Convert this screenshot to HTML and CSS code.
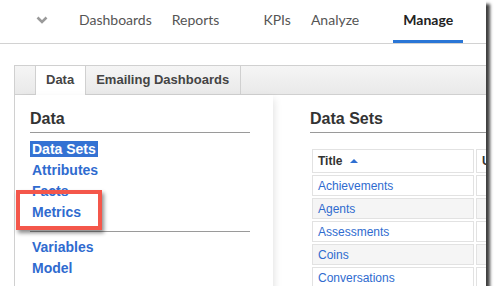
FILE: index.html
```html
<!DOCTYPE html>
<html lang="en">
<head>
  <meta charset="UTF-8">
  <title>Manage - Data</title>
  <link rel="stylesheet" href="styles.css">
</head>
<body>
  <div class="frame">
    <div class="topnav">
      <span class="nav-toggle">
        <svg width="12" height="8" viewBox="0 0 12 8"><polyline points="1.5,1.5 6,6 10.5,1.5" fill="none" stroke="#9a9a9a" stroke-width="2.6"/></svg>
      </span>
      <a class="nav-item">Dashboards</a>
      <a class="nav-item">Reports</a>
      <a class="nav-item gap">KPIs</a>
      <a class="nav-item">Analyze</a>
      <a class="nav-item gap active">Manage</a>
    </div>

    <div class="main">
      <div class="tabpanel">
        <div class="tabs">
          <span class="tab-spacer"></span>
          <span class="tab active">Data</span>
          <span class="tab">Emailing Dashboards</span>
        </div>
        <div class="tab-body">
          <div class="sidebar">
            <h2 class="section-title">Data</h2>
            <ul class="side-list">
              <li><a class="selected">Data Sets</a></li>
              <li><a>Attributes</a></li>
              <li><a>Facts</a></li>
              <li><a>Metrics</a></li>
            </ul>
            <hr class="divider">
            <ul class="side-list">
              <li><a>Variables</a></li>
              <li><a>Model</a></li>
            </ul>
          </div>
          <div class="content">
            <h2 class="section-title">Data Sets</h2>
            <table class="grid">
              <thead>
                <tr>
                  <th class="col-title">Title
                    <svg class="sort" width="8" height="5" viewBox="0 0 8 5"><polygon points="0,5 4,1 8,5" fill="#2f6fd2"/></svg>
                  </th>
                  <th>Updated</th>
                </tr>
              </thead>
              <tbody>
                <tr><td><a>Achievements</a></td><td></td></tr>
                <tr class="odd"><td><a>Agents</a></td><td></td></tr>
                <tr><td><a>Assessments</a></td><td></td></tr>
                <tr class="odd"><td><a>Coins</a></td><td></td></tr>
                <tr><td><a>Conversations</a></td><td></td></tr>
              </tbody>
            </table>
          </div>
        </div>
      </div>
    </div>

    <div class="callout"></div>
  </div>
</body>
</html>
```

FILE: styles.css
```css
body {
  margin: 0;
  background: #fff;
  font-family: "Liberation Sans", Arial, sans-serif;
}

.frame {
  position: relative;
  width: 486px;
  height: 286px;
  overflow: hidden;
  background: #fff;
  box-shadow: 4px 4px 3px rgba(0, 0, 0, 0.75);
}

/* top navigation */
.topnav {
  display: flex;
  height: 43px;
  border-bottom: 1px solid #d2d2d2;
  font-family: Lato, "Liberation Sans", sans-serif;
  font-size: 14px;
}

.nav-toggle {
  display: flex;
  align-items: center;
  justify-content: center;
  width: 24px;
  height: 40px;
  margin-left: 30px;
  margin-right: 15px;
}

.nav-item {
  height: 40px;
  line-height: 40px;
  padding: 0 10px 3px;
  color: #555;
  white-space: nowrap;
}

.nav-item.gap {
  margin-left: 24px;
}

.nav-item.active {
  padding-bottom: 0;
  border-bottom: 3px solid #2a76d6;
  color: #222;
  font-weight: bold;
}

/* tab panel */
.main {
  padding: 21px 0 0 14px;
}

.tabpanel {
  width: 540px;
  height: 260px;
  border: 1px solid #d0d0d0;
}

.tabs {
  display: flex;
  height: 28px;
  background: linear-gradient(#f5f5f5, #e9e9e9);
  border-bottom: 1px solid #d0d0d0;
}

.tab-spacer {
  width: 20px;
  border-right: 1px solid #d0d0d0;
}

.tab {
  padding: 0 11px 0 10px;
  line-height: 28px;
  font-size: 13px;
  font-weight: bold;
  color: #444;
  border-right: 1px solid #d0d0d0;
}

.tab.active {
  height: 29px;
  background: #fff;
}

.tab-body {
  display: flex;
  height: 231px;
}

.sidebar {
  width: 243px;
  padding: 14px 0 0 15px;
  background: #fff;
  box-shadow: 5px 0 8px -4px rgba(0, 0, 0, 0.12);
}

.content {
  flex: 1;
  padding: 14px 0 0 37px;
}

.section-title {
  margin: 0;
  padding-bottom: 4px;
  font-size: 16px;
  line-height: 19px;
  color: #333;
  border-bottom: 1px solid #9a9a9a;
}

.sidebar .section-title {
  width: 220px;
}

.side-list {
  list-style: none;
  margin: 6px 0 0;
  padding: 0;
}

.side-list li {
  line-height: 21px;
  font-size: 14px;
  font-weight: bold;
}

.side-list a {
  color: #2f6bcf;
  padding: 0 2px;
}

.side-list a.selected {
  background: #3472d3;
  color: #fff;
}

.divider {
  width: 220px;
  margin: 8px 0 0;
  border: 0;
  border-top: 1px solid #9a9a9a;
}

.divider + .side-list {
  margin-top: 5px;
}

/* data grid */
.grid {
  margin: 14px 0 0;
  border-spacing: 2px;
  font-size: 12px;
}

.grid th,
.grid td {
  border: 1px solid #e2e2e2;
  padding: 0 5px;
  line-height: 14px;
  text-align: left;
  white-space: nowrap;
}

.grid th {
  height: 22px;
  color: #333;
}

.grid th.col-title {
  width: 150px;
}

.grid td {
  height: 19px;
}

.grid tr.odd td {
  background: #f5f5f5;
}

.grid a {
  color: #2f6bcf;
}

.sort {
  margin-left: 4px;
  vertical-align: 2px;
}

/* annotation box over the Metrics link */
.callout {
  position: absolute;
  left: 16px;
  top: 190px;
  width: 86px;
  height: 40px;
  box-sizing: border-box;
  border: 4px solid #f4574b;
  box-shadow: 2px 3px 4px rgba(0, 0, 0, 0.45);
}
```
